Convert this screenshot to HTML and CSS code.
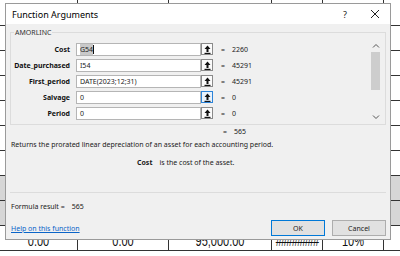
FILE: index.html
```html
<!DOCTYPE html>
<html lang="en">
<head>
    <meta charset="UTF-8">
    <meta name="viewport" content="width=device-width, initial-scale=1.0">
    <title>Function Arguments</title>
    <link rel="stylesheet" href="styles.css">
</head>
<body>

    <div class="sheet">
        <div class="row"><div class="cell"></div><div class="cell"></div><div class="cell"></div><div class="cell"></div><div class="cell"></div><div class="cell"></div></div>
        <div class="row"><div class="cell"></div><div class="cell"></div><div class="cell"></div><div class="cell"></div><div class="cell"></div><div class="cell"></div></div>
        <div class="row"><div class="cell"></div><div class="cell"></div><div class="cell"></div><div class="cell"></div><div class="cell"></div><div class="cell"></div></div>
        <div class="row"><div class="cell"></div><div class="cell"></div><div class="cell"></div><div class="cell"></div><div class="cell"></div><div class="cell"></div></div>
        <div class="row"><div class="cell"></div><div class="cell"></div><div class="cell"></div><div class="cell"></div><div class="cell"></div><div class="cell"></div></div>
        <div class="row"><div class="cell"></div><div class="cell"></div><div class="cell"></div><div class="cell"></div><div class="cell"></div><div class="cell"></div></div>
        <div class="row"><div class="cell"></div><div class="cell"></div><div class="cell"></div><div class="cell"></div><div class="cell"></div><div class="cell"></div></div>
        <div class="row selected"><div class="cell"></div><div class="cell"></div><div class="cell"></div><div class="cell"></div><div class="cell"></div><div class="cell"></div></div>
        <div class="row selected"><div class="cell"></div><div class="cell"></div><div class="cell"></div><div class="cell"></div><div class="cell"></div><div class="cell"></div></div>
        <div class="row"><div class="cell"><span>0.00</span></div><div class="cell"><span>0.00</span></div><div class="cell"><span>95,000.00</span></div><div class="cell hash"><span>########</span></div><div class="cell"><span>10%</span></div><div class="cell"></div></div>
    </div>

    <div class="dialog">
        <div class="titlebar">
            <span class="title">Function Arguments</span>
            <span class="title-help">?</span>
            <span class="title-close">
                <svg width="10" height="10" viewBox="0 0 10 10"><path d="M1 1 L9 9 M9 1 L1 9" stroke="#222" stroke-width="1"/></svg>
            </span>
        </div>
        <div class="dialog-body">
            <fieldset class="args">
                <legend>AMORLINC</legend>
                <div class="args-inner">
                    <div class="arg-list">
                        <div class="arg-row">
                            <label class="arg-name">Cost</label>
                            <div class="arg-input"><span class="sel">G54</span><span class="caret"></span></div>
                            <div class="ref-btn"><svg width="7" height="9" viewBox="0 0 7 9"><path d="M3.5 0.5 L6.5 4 L4.5 4 L4.5 7 L2.5 7 L2.5 4 L0.5 4 Z" fill="#111"/><rect x="0.5" y="7.8" width="6" height="1.2" fill="#111"/></svg></div>
                            <span class="eq">=</span>
                            <span class="arg-value">2260</span>
                        </div>
                        <div class="arg-row">
                            <label class="arg-name">Date_purchased</label>
                            <div class="arg-input">I54</div>
                            <div class="ref-btn"><svg width="7" height="9" viewBox="0 0 7 9"><path d="M3.5 0.5 L6.5 4 L4.5 4 L4.5 7 L2.5 7 L2.5 4 L0.5 4 Z" fill="#111"/><rect x="0.5" y="7.8" width="6" height="1.2" fill="#111"/></svg></div>
                            <span class="eq">=</span>
                            <span class="arg-value">45291</span>
                        </div>
                        <div class="arg-row">
                            <label class="arg-name">First_period</label>
                            <div class="arg-input">DATE(2023;12;31)</div>
                            <div class="ref-btn"><svg width="7" height="9" viewBox="0 0 7 9"><path d="M3.5 0.5 L6.5 4 L4.5 4 L4.5 7 L2.5 7 L2.5 4 L0.5 4 Z" fill="#111"/><rect x="0.5" y="7.8" width="6" height="1.2" fill="#111"/></svg></div>
                            <span class="eq">=</span>
                            <span class="arg-value">45291</span>
                        </div>
                        <div class="arg-row">
                            <label class="arg-name">Salvage</label>
                            <div class="arg-input">0</div>
                            <div class="ref-btn hover"><svg width="7" height="9" viewBox="0 0 7 9"><path d="M3.5 0.5 L6.5 4 L4.5 4 L4.5 7 L2.5 7 L2.5 4 L0.5 4 Z" fill="#111"/><rect x="0.5" y="7.8" width="6" height="1.2" fill="#111"/></svg></div>
                            <span class="eq">=</span>
                            <span class="arg-value">0</span>
                        </div>
                        <div class="arg-row">
                            <label class="arg-name">Period</label>
                            <div class="arg-input">0</div>
                            <div class="ref-btn"><svg width="7" height="9" viewBox="0 0 7 9"><path d="M3.5 0.5 L6.5 4 L4.5 4 L4.5 7 L2.5 7 L2.5 4 L0.5 4 Z" fill="#111"/><rect x="0.5" y="7.8" width="6" height="1.2" fill="#111"/></svg></div>
                            <span class="eq">=</span>
                            <span class="arg-value">0</span>
                        </div>
                    </div>
                    <div class="scrollbar">
                        <svg class="scroll-arrow" width="8" height="6" viewBox="0 0 8 6"><path d="M1 4.5 L4 1.5 L7 4.5" fill="none" stroke="#555" stroke-width="1"/></svg>
                        <div class="scroll-track"><div class="scroll-thumb"></div></div>
                        <svg class="scroll-arrow" width="8" height="6" viewBox="0 0 8 6"><path d="M1 1.5 L4 4.5 L7 1.5" fill="none" stroke="#555" stroke-width="1"/></svg>
                    </div>
                </div>
            </fieldset>

            <div class="result-line"><span class="eq">=</span><span>565</span></div>
            <p class="desc">Returns the prorated linear depreciation of an asset for each accounting period.</p>
            <p class="arg-desc"><b>Cost</b><span>is the cost of the asset.</span></p>

            <div class="separator"></div>

            <div class="formula">Formula result =<span class="formula-value">565</span></div>
            <div class="footer">
                <a class="help-link" href="#">Help on this function</a>
                <button class="btn btn-default">OK</button>
                <button class="btn">Cancel</button>
            </div>
        </div>
    </div>

</body>
</html>
```

FILE: styles.css
```css
body {
    margin: 0;
    width: 400px;
    height: 256px;
    overflow: hidden;
    background-color: #fff;
    position: relative;
}

/* spreadsheet behind the dialog */
.sheet {
    display: flex;
    flex-direction: column;
}
.row {
    display: grid;
    grid-template-columns: 78px 91px 103px 51px 61px 20px;
    height: 25px;
}
.row:first-child {
    height: 26px;
}
.cell {
    box-sizing: border-box;
    border-right: 1px solid #333;
    border-bottom: 1px solid #333;
    display: flex;
    align-items: flex-end;
    justify-content: center;
    font-family: "Liberation Sans", Arial, sans-serif;
    font-size: 11px;
    line-height: 11px;
    color: #111;
    padding-bottom: 1px;
}
.cell span {
    display: inline-block;
    transform: scaleY(1.3);
    transform-origin: bottom;
}
.hash {
    letter-spacing: -0.8px;
}
.selected .cell {
    background-color: #d6d6d6;
}

/* dialog */
.dialog {
    position: absolute;
    left: 5px;
    top: 3px;
    width: 386px;
    height: 237px;
    box-sizing: border-box;
    border: 1px solid #9a9a9a;
    background-color: #f0f0f0;
    font-family: "Noto Sans", "Liberation Sans", sans-serif;
    font-size: 7px;
    color: #1a1a1a;
    display: flex;
    flex-direction: column;
}
.titlebar {
    height: 20px;
    background-color: #fff;
    display: flex;
    align-items: center;
    padding-left: 6px;
    flex-shrink: 0;
}
.title {
    font-size: 9px;
    flex: 1;
    color: #000;
}
.title-help {
    font-size: 9px;
    width: 30px;
    text-align: center;
}
.title-close {
    width: 30px;
    display: flex;
    justify-content: center;
}
.dialog-body {
    display: flex;
    flex-direction: column;
    padding: 0 4px;
    flex: 1;
}

.args {
    margin: 4px 0 0 0;
    padding: 0 0 3px 0;
    border: 1px solid #dcdcdc;
    min-width: 0;
}
.args legend {
    margin-left: 3px;
    padding: 0 1px;
    line-height: 9px;
    font-size: 7px;
    color: #333;
}
.args-inner {
    display: flex;
    padding-top: 4px;
}
.arg-list {
    flex: 1;
    display: flex;
    flex-direction: column;
}
.arg-row {
    height: 16px;
    display: flex;
    align-items: center;
}
.arg-name {
    width: 59px;
    text-align: right;
    font-weight: bold;
    margin-right: 6px;
    color: #111;
}
.arg-input {
    width: 125px;
    height: 13px;
    box-sizing: border-box;
    background-color: #fff;
    border: 1px solid #b5b5b5;
    padding-left: 3px;
    line-height: 11px;
    display: flex;
    align-items: center;
    color: #222;
}
.sel {
    background-color: #c9c9c9;
}
.caret {
    width: 1px;
    height: 9px;
    background-color: #111;
}
.ref-btn {
    width: 12px;
    height: 12px;
    box-sizing: border-box;
    border: 1px solid #8a8a8a;
    background-color: #fbfbfb;
    display: flex;
    align-items: center;
    justify-content: center;
}
.ref-btn.hover {
    border-color: #2c83d8;
    background-color: #e8f2fc;
}
.eq {
    margin-left: 8px;
    width: 11px;
}
.arg-value {
    color: #222;
}

.scrollbar {
    width: 11px;
    margin-right: 4px;
    display: flex;
    flex-direction: column;
    align-items: center;
    padding: 2px 0 1px;
}
.scroll-arrow {
    flex-shrink: 0;
}
.scroll-track {
    flex: 1;
    width: 100%;
    padding: 3px 1px 0;
    box-sizing: border-box;
}
.scroll-thumb {
    height: 38px;
    background-color: #cdcdcd;
}

.result-line {
    margin-top: 2px;
    padding-left: 213px;
    line-height: 9px;
    display: flex;
}
.result-line .eq {
    margin-left: 0;
}
.desc {
    margin: 4px 0 0 1px;
    line-height: 9px;
}
.arg-desc {
    margin: 9px 0 0 127px;
    line-height: 9px;
}
.arg-desc span {
    margin-left: 7px;
}
.separator {
    margin-top: 25px;
    height: 1px;
    background-color: #dcdcdc;
}
.formula {
    margin: 9px 0 0 1px;
    line-height: 9px;
}
.formula-value {
    margin-left: 7px;
}
.footer {
    margin-top: 9px;
    display: flex;
    align-items: center;
}
.help-link {
    flex: 1;
    margin-left: 1px;
    color: #0a64c8;
    text-decoration: underline;
}
.btn {
    width: 54px;
    height: 16px;
    margin-left: 7px;
    padding: 0;
    box-sizing: border-box;
    border: 1px solid #adadad;
    background-color: #e1e1e1;
    font-family: "Noto Sans", "Liberation Sans", sans-serif;
    font-size: 7px;
    color: #222;
}
.btn-default {
    border-color: #0078d7;
}
```
